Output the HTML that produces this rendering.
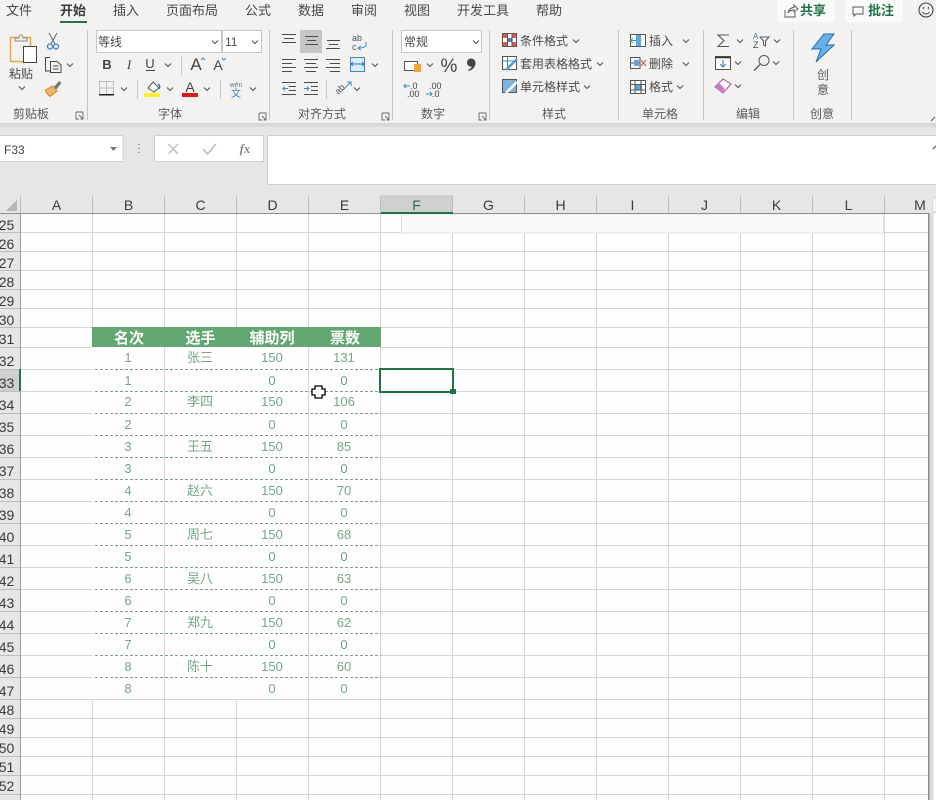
<!DOCTYPE html>
<html lang="zh-CN"><head><meta charset="utf-8"><title>Excel</title>
<style>
html,body{margin:0;padding:0;width:936px;height:800px;overflow:hidden;background:#fff}
svg{display:block;font-family:"Liberation Sans","Noto Sans CJK SC",sans-serif}
.t{font-size:13px;fill:#484848}
.r{font-size:12px;fill:#4a4a4a}
.g{font-size:12px;fill:#5a5a5a;text-anchor:middle}
.c{font-size:14px;fill:#3a3a3a;text-anchor:middle}
.n{font-size:14px;fill:#3a3a3a;text-anchor:middle}
.h{font-size:15px;font-weight:700;fill:#fff;text-anchor:middle}
.b{font-size:13px;fill:#74a588;text-anchor:middle}
.ln{stroke:#4a4a4a;stroke-width:1;fill:none}
.sep{stroke:#c4c4c4;stroke-width:1}
.grid{stroke:#d6d6d6;stroke-width:1}
.d{stroke:#7f9f8d;stroke-width:1;stroke-dasharray:3 2}
</style></head><body>
<svg width="936" height="800" viewBox="0 0 936 800" xmlns="http://www.w3.org/2000/svg">
<defs>
<path id="v" d="M-3 -1.500L0 1.500L3 -1.500" fill="none" stroke="#555" stroke-width="1.100"/>
<path id="lau" d="M0 0H7V7M0 0V7H3M3 3L7 7M4.500 7H7V4.500" fill="none" stroke="#666" stroke-width=".9"/>
</defs>
<!-- ribbon -->
<rect width="936" height="124" fill="#f3f2f1"/>
<rect y="123" width="936" height="1" fill="#d2d2d2"/>
<rect y="124" width="936" height="71" fill="#e6e6e6"/>
<rect y="124" width="936" height="3" fill="#dadada"/>
<!-- tabs -->
<text class="t" x="6" y="15">文件</text>
<text class="t" x="60" y="15" style="font-weight:700;fill:#3a3a3a">开始</text>
<rect x="60" y="21" width="27" height="2" fill="#217346"/>
<text class="t" x="113" y="15">插入</text>
<text class="t" x="166" y="15">页面布局</text>
<text class="t" x="245" y="15">公式</text>
<text class="t" x="298" y="15">数据</text>
<text class="t" x="351" y="15">审阅</text>
<text class="t" x="404" y="15">视图</text>
<text class="t" x="457" y="15">开发工具</text>
<text class="t" x="536" y="15">帮助</text>
<!-- share -->
<rect x="777" y="0" width="58" height="22" fill="#fafafa"/>
<path d="M785 10V17H795V12M788 13C789 9 791 7.500 794 7.500V5L798 9L794 12V10C791 10 789 11 788 13Z" fill="none" stroke="#555" stroke-width=".9"/>
<text x="800" y="15" style="font-size:13px;font-weight:700;fill:#217346">共享</text>
<rect x="845" y="0" width="58" height="22" fill="#fafafa"/>
<path d="M853 7H863V14H856L854 16V14H853Z" fill="none" stroke="#555" stroke-width=".9"/>
<text x="868" y="15" style="font-size:13px;font-weight:700;fill:#217346">批注</text>
<circle cx="926" cy="10" r="7" fill="none" stroke="#444" stroke-width="1.100"/>
<circle cx="923.500" cy="8" r=".9" fill="#444"/><circle cx="928.500" cy="8" r=".9" fill="#444"/>
<path d="M922.500 12C924 14.500 928 14.500 929.500 12" fill="none" stroke="#444"/>
<!-- separators -->
<path d="M87.500 30V120M269.500 30V120M392.500 30V120M489.500 30V120M618.500 30V120M703.500 30V120M793.500 30V120M851.500 30V120M181.500 56V75M137.500 80V99M220.500 80V99M326.500 80V99" stroke="#c4c4c4" fill="none"/>
<!-- clipboard -->
<rect x="10.500" y="37.500" width="20" height="24" fill="none" stroke="#e8a740" stroke-width="1.500"/>
<path d="M15 41V38H19C19 34 23 34 23 38H27V41Z" fill="#f3f2f1" stroke="#888"/>
<rect x="23.500" y="46.500" width="13" height="16" fill="#fff" stroke="#444"/>
<text class="r" x="9" y="78">粘贴</text>
<use href="#v" x="22" y="88"/>
<path d="M49 33L55 44M57 33L51 44" stroke="#666" fill="none"/>
<circle cx="50" cy="46.500" r="2.500" fill="none" stroke="#3b87c4" stroke-width="1.300"/><circle cx="56" cy="46.500" r="2.500" fill="none" stroke="#3b87c4" stroke-width="1.300"/>
<path d="M50 57.500H45.500V71H50M50.500 61.500H57L61 65V72.500H50.500ZM53 66H58.500M53 69H58.500" fill="none" stroke="#444"/>
<use href="#v" x="70" y="65"/>
<path d="M53 88L59 81L61.500 83L56 90Z" fill="#777"/>
<path d="M45.500 90L53 86L57 91L50 96.500C48 95 46 93 45.500 90Z" fill="#f0b56a" stroke="#d08a2e"/>
<text class="g" x="31" y="118">剪贴板</text>
<use href="#lau" x="76" y="112"/>
<!-- font -->
<rect x="96.500" y="30.500" width="125" height="22" fill="#fff" stroke="#c6c6c6"/>
<rect x="222.500" y="30.500" width="39" height="22" fill="#fff" stroke="#c6c6c6"/>
<text class="r" x="98" y="46">等线</text>
<use href="#v" x="215" y="42"/>
<text class="r" x="225" y="46">11</text>
<use href="#v" x="255" y="42"/>
<text x="107" y="69" style="font-size:13px;font-weight:700;fill:#444;text-anchor:middle">B</text>
<text x="129" y="69" style="font-size:13px;font-style:italic;fill:#444;text-anchor:middle;font-family:'Liberation Serif',serif">I</text>
<text x="150" y="68" style="font-size:13px;fill:#444;text-anchor:middle">U</text>
<rect x="146" y="70" width="9" height="1" fill="#444"/>
<use href="#v" x="168" y="65"/>
<text x="196" y="70" style="font-size:17px;fill:#444;text-anchor:middle">A</text>
<path d="M201 60L203 58L205 60" fill="none" stroke="#3b87c4"/>
<text x="218" y="70" style="font-size:14px;fill:#444;text-anchor:middle">A</text>
<path d="M222 58L224 60L226 58" fill="none" stroke="#3b87c4"/>
<path d="M99.500 81.500H113.500V94.500M99.500 81.500V94.500M106.500 81.500V94.500M99.500 88H113.500" fill="none" stroke="#888" stroke-dasharray="1 1"/>
<rect x="99" y="94" width="15" height="1.500" fill="#222"/>
<use href="#v" x="124" y="89"/>
<path d="M148 88L153 82L159 88L154 92Z" fill="#fff" stroke="#555"/>
<path d="M158 84C160 85 160 87 159 89" fill="none" stroke="#2f78b7" stroke-width="1.500"/>
<rect x="144" y="93" width="16" height="4" fill="#ffee2e"/>
<use href="#v" x="170" y="89"/>
<text x="190" y="92" style="font-size:14px;fill:#444;text-anchor:middle">A</text>
<rect x="182" y="93" width="16" height="4" fill="#d9161c"/>
<use href="#v" x="207" y="89"/>
<text x="236" y="87" style="font-size:7px;fill:#777;text-anchor:middle">wén</text>
<text x="236" y="97" style="font-size:10px;fill:#3b87c4;text-anchor:middle">文</text>
<use href="#v" x="253" y="89"/>
<text class="g" x="170" y="118">字体</text>
<use href="#lau" x="259" y="113"/>
<!-- align -->
<rect x="300" y="30" width="22" height="23" fill="#c6c6c6"/>
<path d="M282 34.500H296M284 38.500H294M282 42.500H296M305 36.500H318M307 40.500H316M305 44.500H318M327 40.500H340M329 44.500H338M326 48.500H340" class="ln"/>
<path d="M282 59.500H296M282 63.500H292M282 67.500H296M282 71.500H292M304 59.500H318M306 63.500H316M304 67.500H318M306 71.500H316M326 59.500H340M330 63.500H340M326 67.500H340M330 71.500H340" class="ln"/>
<path d="M282 82.500H296M289 86.500H296M289 90.500H296M282 94.500H296M304 82.500H318M311 86.500H318M311 90.500H318M304 94.500H318" class="ln"/>
<path d="M288 88.500H283M285 86.500L283 88.500L285 90.500M304 88.500H309M307 86.500L309 88.500L307 90.500" fill="none" stroke="#2f8fd0"/>
<text x="352" y="41" style="font-size:9px;fill:#555">ab</text>
<text x="352" y="50" style="font-size:9px;fill:#555">c</text>
<path d="M366 42C367 47 364 48 359 48M361 46L358 48L361 50" fill="none" stroke="#2f8fd0"/>
<rect x="350.500" y="57.500" width="14" height="14" fill="#dcecf8" stroke="#3b87c4"/>
<path d="M351 64H364M353 62L351 64L353 66M362 62L364 64L362 66" fill="none" stroke="#2f78b7"/>
<use href="#v" x="375" y="65"/>
<path d="M343 90L351 82M351 82H347M351 82V86" fill="none" stroke="#2f8fd0"/>
<text x="335" y="93" style="font-size:9px;fill:#555" transform="rotate(-45 339 90)">ab</text>
<use href="#v" x="357" y="89"/>
<text class="g" x="322" y="118">对齐方式</text>
<use href="#lau" x="382" y="113"/>
<!-- number -->
<rect x="401.500" y="30.500" width="80" height="22" fill="#fff" stroke="#c6c6c6"/>
<text class="r" x="404" y="46">常规</text>
<use href="#v" x="476" y="42"/>
<rect x="404.500" y="61.500" width="13" height="9" fill="#fff" stroke="#555"/>
<rect x="414" y="64" width="7" height="8" fill="#f0a43a"/>
<use href="#v" x="430" y="65"/>
<text x="449" y="72" style="font-size:19px;fill:#444;text-anchor:middle">%</text>
<path d="M471 58.500C474 58.500 475.500 60.500 475.500 63C475.500 67 472.500 70 468.500 71L468 70C470 69 471.500 68 471.800 66.500C469.500 67 467 65.500 467 62.500C467 60 469 58.500 471 58.500Z" fill="#444"/>
<text x="410" y="89" style="font-size:9px;fill:#444">.0</text>
<text x="407" y="97" style="font-size:9px;fill:#444">.00</text>
<path d="M404 86H410M406 84L404 86L406 88" fill="none" stroke="#2f8fd0"/>
<text x="429" y="89" style="font-size:9px;fill:#444">.00</text>
<text x="432" y="97" style="font-size:9px;fill:#444">.0</text>
<path d="M426 94H432M430 92L432 94L430 96" fill="none" stroke="#2f8fd0"/>
<text class="g" x="433" y="118">数字</text>
<use href="#lau" x="479" y="113"/>
<!-- style -->
<rect x="502.500" y="33.500" width="14" height="13" fill="#fff" stroke="#555"/>
<rect x="503" y="34" width="4" height="4" fill="#e4564f"/><rect x="512" y="34" width="4" height="4" fill="#e4564f"/><rect x="507" y="38" width="5" height="4" fill="#3b87c4"/><rect x="503" y="42" width="4" height="4" fill="#e4564f"/><rect x="512" y="42" width="4" height="4" fill="#e4564f"/>
<path d="M507.500 34V46M512 34V46" stroke="#555"/>
<text class="r" x="520" y="45">条件格式</text><use href="#v" x="576" y="41"/>
<rect x="502.500" y="56.500" width="14" height="13" fill="#fff" stroke="#555"/>
<path d="M503 61H516M507.500 57V69" stroke="#3b87c4" fill="none"/>
<path d="M506 70L517 59" stroke="#5a9bd0" stroke-width="2.500"/>
<text class="r" x="520" y="68">套用表格格式</text><use href="#v" x="600" y="64"/>
<rect x="502.500" y="79.500" width="14" height="13" fill="#7fb3dc" stroke="#555"/>
<path d="M506 93L517 82" stroke="#fff" stroke-width="2.500"/>
<text class="r" x="520" y="91">单元格样式</text><use href="#v" x="587" y="87"/>
<text class="g" x="554" y="118">样式</text>
<!-- cells -->
<rect x="630.500" y="34.500" width="15" height="12" fill="#fff" stroke="#555"/>
<rect x="636" y="35" width="5" height="11" fill="#5aa7de"/>
<path d="M631 40.500H636M633 38L630 40.500L633 43" fill="none" stroke="#2aa198"/>
<text class="r" x="649" y="45">插入</text><use href="#v" x="686" y="41"/>
<path d="M630.500 57.500H640V68.500H630.500ZM630.500 63H640" fill="none" stroke="#555"/>
<rect x="634" y="60" width="5" height="6" fill="#5aa7de"/>
<path d="M641 60L646 66M646 60L641 66" stroke="#e05050"/>
<text class="r" x="649" y="68">删除</text><use href="#v" x="686" y="64"/>
<rect x="630.500" y="80.500" width="15" height="13" fill="#fff" stroke="#555"/>
<rect x="635" y="84" width="7" height="6" fill="#5aa7de"/>
<path d="M631 84.500H645M631 90H645M635 81V93M641 81V93" stroke="#555" fill="none"/>
<text class="r" x="649" y="91">格式</text><use href="#v" x="680" y="87"/>
<text class="g" x="660" y="118">单元格</text>
<!-- edit -->
<path d="M729 35H718L724 40.500L718 46.500H729" fill="none" stroke="#555" stroke-width="1.100"/>
<use href="#v" x="740" y="41"/>
<text x="753" y="39" style="font-size:8px;fill:#2f78b7">A</text>
<text x="753" y="48" style="font-size:9px;fill:#444">Z</text>
<path d="M760 37H769L765.500 41V46L763.500 45V41Z" fill="none" stroke="#555"/>
<use href="#v" x="777" y="41"/>
<rect x="715.500" y="56.500" width="15" height="13" fill="#fff" stroke="#555"/>
<path d="M715 57.500H731" stroke="#333" stroke-width="1.500"/>
<path d="M723 60V67M720 64L723 67L726 64" fill="none" stroke="#2f78b7"/>
<use href="#v" x="738" y="63"/>
<circle cx="764" cy="60.500" r="5" fill="none" stroke="#555"/>
<path d="M760 64.500L754 70.500" stroke="#555" stroke-width="1.300"/>
<use href="#v" x="776" y="63"/>
<path d="M715 87L723 79L731 84L723 93Z" fill="#fff" stroke="#a64ea6"/>
<path d="M715 87L719 83L725 89L722 93Z" fill="#c77bc7"/>
<use href="#v" x="738" y="86"/>
<text class="g" x="748" y="118">编辑</text>
<!-- idea -->
<path d="M824 34H834L826 45H834L816 62L821 49H812Z" fill="#69b1ea" stroke="#1f6fae" stroke-width="1"/>
<text class="g" x="823" y="79">创</text>
<text class="g" x="823" y="94">意</text>
<text class="g" x="822" y="118">创意</text>
<path d="M931 121L935 117" stroke="#555" fill="none"/>
<!-- formula bar -->
<rect x="-1" y="135.500" width="124" height="26" fill="#fff" stroke="#d0d0d0"/>
<text x="4" y="154" style="font-size:12px;fill:#444">F33</text>
<path d="M110 147H117L113.500 151Z" fill="#777"/>
<path d="M139 144V145M139 148V149M139 152V153" stroke="#999" stroke-width="2"/>
<rect x="154.500" y="135.500" width="109" height="26" fill="#fff" stroke="#d0d0d0"/>
<path d="M168.500 144L178 154M178 144L168.500 154" stroke="#c4c4c4" stroke-width="1.600" fill="none"/>
<path d="M203 149L207.500 154L216 144" stroke="#c4c4c4" stroke-width="1.800" fill="none"/>
<text x="245" y="153" style="font-size:13px;font-style:italic;font-weight:700;fill:#888;text-anchor:middle;font-family:'Liberation Serif',serif">fx</text>
<rect x="267.500" y="135.500" width="670" height="49" fill="#fff" stroke="#cfcfcf"/>
<path d="M933 149L936 146" stroke="#555" stroke-width="1.200" fill="none"/>
<!-- column headers -->
<rect x="0" y="195" width="936" height="18" fill="#e6e6e6"/>
<rect x="381" y="195" width="72" height="18" fill="#d0d0d0"/>
<path d="M17 200V211H6Z" fill="#b5b5b5"/>
<path d="M20.500 196V213M92.500 196V213M164.500 196V213M236.500 196V213M308.500 196V213M380.500 196V213M452.500 196V213M524.500 196V213M596.500 196V213M668.500 196V213M740.500 196V213M812.500 196V213M884.500 196V213" stroke="#bcbcbc"/>
<text class="c" x="56.500" y="210">A</text><text class="c" x="128.500" y="210">B</text><text class="c" x="200.500" y="210">C</text><text class="c" x="272.500" y="210">D</text><text class="c" x="344.500" y="210">E</text><text class="c" x="416.500" y="210" style="fill:#2d6a4a">F</text><text class="c" x="488.500" y="210">G</text><text class="c" x="560.500" y="210">H</text><text class="c" x="632.500" y="210">I</text><text class="c" x="704.500" y="210">J</text><text class="c" x="776.500" y="210">K</text><text class="c" x="848.500" y="210">L</text><text class="c" x="920" y="210">M</text>
<rect x="933" y="198" width="3" height="14" fill="#fff" stroke="#bbb" stroke-width=".5"/>
<!-- grid -->
<rect x="21" y="214" width="907" height="586" fill="#fefefe"/>
<path class="grid" d="M92.500 214V327M92.500 699V800M164.500 214V800M236.500 214V327M236.500 699V800M308.500 214V800M380.500 214V800M452.500 214V800M524.500 214V800M596.500 214V800M668.500 214V800M740.500 214V800M812.500 214V800M884.500 214V800"/>
<path class="grid" d="M21 232.500H928M21 251.500H928M21 270.500H928M21 289.500H928M21 308.500H928M21 327.500H928M21 347.500H92M381 347.500H928M21 369.500H92M381 369.500H928M21 391.500H92M381 391.500H928M21 413.500H92M381 413.500H928M21 435.500H92M381 435.500H928M21 457.500H92M381 457.500H928M21 479.500H92M381 479.500H928M21 501.500H92M381 501.500H928M21 523.500H92M381 523.500H928M21 545.500H92M381 545.500H928M21 567.500H92M381 567.500H928M21 589.500H92M381 589.500H928M21 611.500H92M381 611.500H928M21 633.500H92M381 633.500H928M21 655.500H92M381 655.500H928M21 677.500H92M381 677.500H928M21 699.500H928M21 718.500H928M21 737.500H928M21 756.500H928M21 775.500H928M21 794.500H928"/>
<!-- floating strip -->
<rect x="401.500" y="214" width="482" height="19" fill="#fafafa" stroke="#e2e2e2"/>
<!-- row headers -->
<rect x="0" y="214" width="20" height="586" fill="#e6e6e6"/>
<rect x="0" y="369" width="20" height="22" fill="#cfcfcf"/>
<rect x="20" y="213" width="1" height="587" fill="#9c9c9c"/>
<rect x="0" y="213" width="928" height="1" fill="#8f8f8f"/>
<path d="M0 232.500H20M0 251.500H20M0 270.500H20M0 289.500H20M0 308.500H20M0 327.500H20M0 347.500H20M0 369.500H20M0 391.500H20M0 413.500H20M0 435.500H20M0 457.500H20M0 479.500H20M0 501.500H20M0 523.500H20M0 545.500H20M0 567.500H20M0 589.500H20M0 611.500H20M0 633.500H20M0 655.500H20M0 677.500H20M0 699.500H20M0 718.500H20M0 737.500H20M0 756.500H20M0 775.500H20M0 794.500H20" stroke="#bdbdbd"/>
<rect x="19" y="369" width="2" height="22" fill="#217346"/>
<rect x="381" y="212" width="72" height="2" fill="#217346"/>
<text class="n" x="6.500" y="230">25</text><text class="n" x="6.500" y="249">26</text><text class="n" x="6.500" y="268">27</text><text class="n" x="6.500" y="287">28</text><text class="n" x="6.500" y="306">29</text><text class="n" x="6.500" y="325">30</text><text class="n" x="6.500" y="344">31</text><text class="n" x="6.500" y="366">32</text><text class="n" x="6.500" y="388">33</text><text class="n" x="6.500" y="410">34</text><text class="n" x="6.500" y="432">35</text><text class="n" x="6.500" y="454">36</text><text class="n" x="6.500" y="476">37</text><text class="n" x="6.500" y="498">38</text><text class="n" x="6.500" y="520">39</text><text class="n" x="6.500" y="542">40</text><text class="n" x="6.500" y="564">41</text><text class="n" x="6.500" y="586">42</text><text class="n" x="6.500" y="608">43</text><text class="n" x="6.500" y="630">44</text><text class="n" x="6.500" y="652">45</text><text class="n" x="6.500" y="674">46</text><text class="n" x="6.500" y="696">47</text><text class="n" x="6.500" y="715">48</text><text class="n" x="6.500" y="734">49</text><text class="n" x="6.500" y="753">50</text><text class="n" x="6.500" y="772">51</text><text class="n" x="6.500" y="791">52</text>
<!-- table -->
<rect x="92" y="327" width="289" height="20" fill="#62a672"/>
<text class="h" x="129" y="343">名次</text><text class="h" x="200.500" y="343">选手</text><text class="h" x="272" y="343">辅助列</text><text class="h" x="345" y="343">票数</text>
<path class="d" d="M95 369.500H381M95 391.500H381M95 413.500H381M95 435.500H381M95 457.500H381M95 479.500H381M95 501.500H381M95 523.500H381M95 545.500H381M95 567.500H381M95 589.500H381M95 611.500H381M95 633.500H381M95 655.500H381M95 677.500H381"/>
<g>
<text class="b" x="128" y="362">1</text><text class="b" x="200" y="362">张三</text><text class="b" x="272" y="362">150</text><text class="b" x="344" y="362">131</text>
<text class="b" x="128" y="385">1</text><text class="b" x="272" y="385">0</text><text class="b" x="344" y="385">0</text>
<text class="b" x="128" y="406">2</text><text class="b" x="200" y="406">李四</text><text class="b" x="272" y="406">150</text><text class="b" x="344" y="406">106</text>
<text class="b" x="128" y="429">2</text><text class="b" x="272" y="429">0</text><text class="b" x="344" y="429">0</text>
<text class="b" x="128" y="451">3</text><text class="b" x="200" y="451">王五</text><text class="b" x="272" y="451">150</text><text class="b" x="344" y="451">85</text>
<text class="b" x="128" y="473">3</text><text class="b" x="272" y="473">0</text><text class="b" x="344" y="473">0</text>
<text class="b" x="128" y="495">4</text><text class="b" x="200" y="495">赵六</text><text class="b" x="272" y="495">150</text><text class="b" x="344" y="495">70</text>
<text class="b" x="128" y="517">4</text><text class="b" x="272" y="517">0</text><text class="b" x="344" y="517">0</text>
<text class="b" x="128" y="539">5</text><text class="b" x="200" y="539">周七</text><text class="b" x="272" y="539">150</text><text class="b" x="344" y="539">68</text>
<text class="b" x="128" y="561">5</text><text class="b" x="272" y="561">0</text><text class="b" x="344" y="561">0</text>
<text class="b" x="128" y="583">6</text><text class="b" x="200" y="583">吴八</text><text class="b" x="272" y="583">150</text><text class="b" x="344" y="583">63</text>
<text class="b" x="128" y="605">6</text><text class="b" x="272" y="605">0</text><text class="b" x="344" y="605">0</text>
<text class="b" x="128" y="627">7</text><text class="b" x="200" y="627">郑九</text><text class="b" x="272" y="627">150</text><text class="b" x="344" y="627">62</text>
<text class="b" x="128" y="649">7</text><text class="b" x="272" y="649">0</text><text class="b" x="344" y="649">0</text>
<text class="b" x="128" y="671">8</text><text class="b" x="200" y="671">陈十</text><text class="b" x="272" y="671">150</text><text class="b" x="344" y="671">60</text>
<text class="b" x="128" y="693">8</text><text class="b" x="272" y="693">0</text><text class="b" x="344" y="693">0</text>
</g>
<!-- selection -->
<rect x="380" y="369" width="73" height="23" fill="none" stroke="#217346" stroke-width="2"/>
<rect x="450" y="389" width="6" height="5" fill="#217346"/>
<!-- cursor -->
<path d="M315 386H322V389H325V395H322V398H315V395H312V389H315Z" fill="#fff" stroke="#000" stroke-width="1.300"/>
<!-- scrollbar -->
<rect x="928" y="213" width="1.500" height="587" fill="#8c8c8c"/>
<rect x="929.500" y="213" width="4" height="587" fill="#dcdcdc"/>
<rect x="933.500" y="213" width="2.500" height="587" fill="#fff"/>
</svg>
</body></html>
